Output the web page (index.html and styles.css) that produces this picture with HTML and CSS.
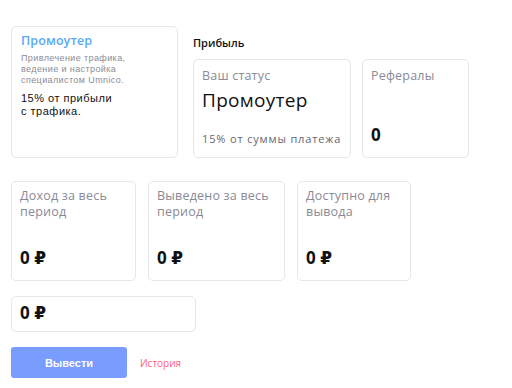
FILE: index.html
```html
<!DOCTYPE html>
<html lang="ru">

<head>
  <meta charset="UTF-8">
  <meta name="viewport" content="width=device-width, initial-scale=1.0">
  <title>Партнёрская программа</title>

  <link rel="stylesheet" href="styles.css">

</head>

<body>
  <div class="page">
    <div class="top">
      <div class="card plan">
        <h3 class="plan-title">Промоутер</h3>
        <p class="plan-desc">Привлечение трафика,<br>ведение и настройка<br>специалистом Umnico.</p>
        <p class="plan-rate">15% от прибыли<br>с трафика.</p>
      </div>

      <div class="profit">
        <h2 class="profit-title">Прибыль</h2>
        <div class="profit-cards">
          <div class="card status">
            <div class="label">Ваш статус</div>
            <div class="status-name">Промоутер</div>
            <div class="status-note">15% от суммы платежа</div>
          </div>
          <div class="card refs">
            <div class="label">Рефералы</div>
            <div class="value">0</div>
          </div>
        </div>
      </div>
    </div>

    <div class="stats">
      <div class="card stat stat-income">
        <div class="label">Доход за весь<br>период</div>
        <div class="value">0 ₽</div>
      </div>
      <div class="card stat stat-out">
        <div class="label">Выведено за весь<br>период</div>
        <div class="value">0 ₽</div>
      </div>
      <div class="card stat stat-avail">
        <div class="label">Доступно для<br>вывода</div>
        <div class="value">0 ₽</div>
      </div>
    </div>

    <div class="card amount">0 ₽</div>

    <div class="actions">
      <button type="button" class="withdraw">Вывести</button>
      <a href="#" class="history">История</a>
    </div>
  </div>
</body>

</html>
```

FILE: styles.css
```css
body {
  margin: 0;
  background: #fff;
  font-family: "Open Sans", "DejaVu Sans", sans-serif;
  color: #111;
}

.page {
  padding: 26px 0 0 11px;
}

.card {
  box-sizing: border-box;
  border: 1px solid #e6e6eb;
  border-radius: 5px;
  background: #fff;
}

.top {
  display: flex;
  gap: 15px;
}

.plan {
  width: 167px;
  height: 132px;
  padding: 5px 9px;
}

.plan-title {
  margin: 0;
  font-size: 12.5px;
  line-height: 17px;
  font-weight: 600;
  color: #5aaaf5;
  letter-spacing: 0.1px;
}

.plan-desc {
  margin: 4px 0 0;
  font-family: "Liberation Sans", Arial, sans-serif;
  font-size: 9px;
  line-height: 11px;
  color: #8c8c96;
  letter-spacing: 0.4px;
}

.plan-rate {
  margin: 6px 0 0;
  font-family: "Liberation Sans", Arial, sans-serif;
  font-size: 11px;
  line-height: 13px;
  color: #111;
  letter-spacing: 0.5px;
}

.profit-title {
  margin: 10px 0 9px;
  font-size: 11px;
  font-weight: 600;
  line-height: 14px;
}

.profit-cards {
  display: flex;
  gap: 11px;
}

.status,
.refs {
  height: 99px;
  padding: 7px 8px 11px;
  display: flex;
  flex-direction: column;
}

.status {
  width: 158px;
}

.refs {
  width: 107px;
}

.label {
  font-size: 12.5px;
  line-height: 17px;
  color: #8a8a96;
  letter-spacing: 0.2px;
}

.stat .label {
  line-height: 16px;
}

.status-name {
  margin-top: 3px;
  font-size: 19px;
  line-height: 26px;
  color: #111;
  letter-spacing: 0.3px;
}

.status-note {
  margin-top: auto;
  font-size: 11px;
  line-height: 15px;
  color: #666670;
  letter-spacing: 0.85px;
}

.value {
  margin-top: auto;
  font-size: 17px;
  line-height: 23px;
  font-weight: 700;
  color: #111;
}

.stats {
  display: flex;
  gap: 12px;
  margin-top: 23px;
}

.stat {
  height: 100px;
  padding: 6px 8px 11px;
  display: flex;
  flex-direction: column;
}

.stat-income {
  width: 125px;
}

.stat-out {
  width: 137px;
}

.stat-avail {
  width: 114px;
}

.amount {
  width: 185px;
  height: 36px;
  margin-top: 15px;
  padding: 0 8px 3px;
  display: flex;
  align-items: center;
  font-size: 17px;
  font-weight: 700;
}

.actions {
  display: flex;
  align-items: center;
  gap: 13px;
  margin-top: 15px;
}

.withdraw {
  width: 116px;
  height: 31px;
  border: 0;
  border-radius: 3px;
  background: #789cff;
  color: #fff;
  font-family: "Liberation Sans", Arial, sans-serif;
  font-size: 11px;
  font-weight: 700;
}

.history {
  font-size: 10px;
  color: #ff5f7e;
  text-decoration: none;
}
```
